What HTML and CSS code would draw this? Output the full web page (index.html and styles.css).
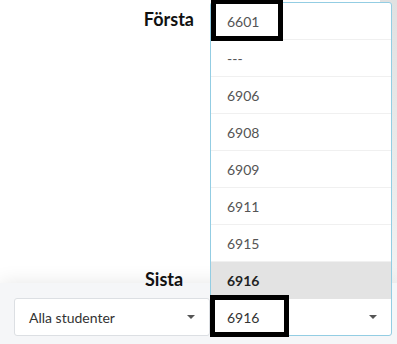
FILE: index.html
```html
<!DOCTYPE html>
<html lang="sv">
<head>
<meta charset="utf-8">
<title>Välj intervall</title>
<link rel="stylesheet" href="styles.css">
</head>
<body>
<div class="page">
  <div class="edge-top"></div>
  <div class="edge-right"></div>
  <div class="main">
    <div class="field-row">
      <span class="lbl lbl-first">Första</span>
    </div>
  </div>
  <div class="footer">
    <span class="lbl lbl-last">Sista</span>
    <div class="select select-left">
      <span class="select-text">Alla studenter</span>
      <span class="caret"></span>
    </div>
  </div>
  <div class="dropdown">
    <ul class="menu">
      <li class="opt">6601</li>
      <li class="opt">---</li>
      <li class="opt">6906</li>
      <li class="opt">6908</li>
      <li class="opt">6909</li>
      <li class="opt">6911</li>
      <li class="opt">6915</li>
      <li class="opt opt-hover">6916</li>
    </ul>
    <div class="control">
      <span class="select-text">6916</span>
      <span class="caret"></span>
    </div>
  </div>
  <div class="mark mark-top"></div>
  <div class="mark mark-bottom"></div>
</div>
</body>
</html>
```

FILE: styles.css
```css
html, body {
  margin: 0;
  padding: 0;
  background: #ffffff;
}

body {
  font-family: Lato, "Noto Sans", "Liberation Sans", sans-serif;
  color: #333;
}

.page {
  position: relative;
  width: 397px;
  height: 344px;
  overflow: hidden;
  display: flex;
  flex-direction: column;
  background: #ffffff;
}

.edge-top {
  position: absolute;
  top: 0;
  left: 380px;
  width: 17px;
  height: 3px;
  background: #e1e1e1;
}

.edge-right {
  position: absolute;
  top: 0;
  right: 0;
  width: 6px;
  height: 283px;
  background: linear-gradient(#e1e1e1, #ececec 70%, #f3f3f3);
}

.main {
  flex: 1;
}

.field-row {
  display: flex;
  justify-content: flex-end;
  width: 194px;
  padding-top: 7px;
}

.lbl {
  font-weight: 700;
  font-size: 18px;
  color: #111;
  line-height: 24px;
}

.footer {
  position: relative;
  height: 61px;
  box-sizing: border-box;
  padding: 15px 0 0 14px;
  background: #f5f6f8;
  box-shadow: 0 0 20px rgba(0, 0, 0, 0.1);
}

.lbl-last {
  position: absolute;
  left: 145px;
  top: -16px;
}

.select {
  display: flex;
  align-items: center;
  justify-content: space-between;
  box-sizing: border-box;
  height: 38px;
  background: #fff;
  border: 1px solid #dcdfe3;
  border-radius: 3px;
  padding: 0 14px 0 14px;
}

.select-left {
  width: 196px;
}

.select-text {
  font-size: 14px;
  color: #333;
}

.caret {
  width: 0;
  height: 0;
  border-top: 4px solid #555;
  border-left: 4px solid transparent;
  border-right: 4px solid transparent;
}

.dropdown {
  position: absolute;
  left: 210px;
  top: 2px;
  width: 182px;
  height: 334px;
  box-sizing: border-box;
  border: 1px solid #93cde3;
  border-radius: 3px;
  background: #fff;
  display: flex;
  flex-direction: column;
  overflow: hidden;
}

.menu {
  list-style: none;
  margin: 0;
  padding: 0;
}

.opt {
  box-sizing: border-box;
  height: 37px;
  display: flex;
  align-items: center;
  padding-left: 16px;
  font-size: 14px;
  color: #555;
  border-bottom: 1px solid #f0f0f0;
}

.opt-hover {
  background: #e3e3e3;
  color: #222;
  font-weight: 700;
  border-bottom: none;
}

.control {
  flex: 1;
  display: flex;
  align-items: center;
  justify-content: space-between;
  padding: 0 14px 0 16px;
}

.mark {
  position: absolute;
  box-sizing: border-box;
  border: 5px solid #000;
}

.mark-top {
  left: 211px;
  top: -1px;
  width: 72px;
  height: 42px;
}

.mark-bottom {
  left: 210px;
  top: 295px;
  width: 79px;
  height: 42px;
}
```
